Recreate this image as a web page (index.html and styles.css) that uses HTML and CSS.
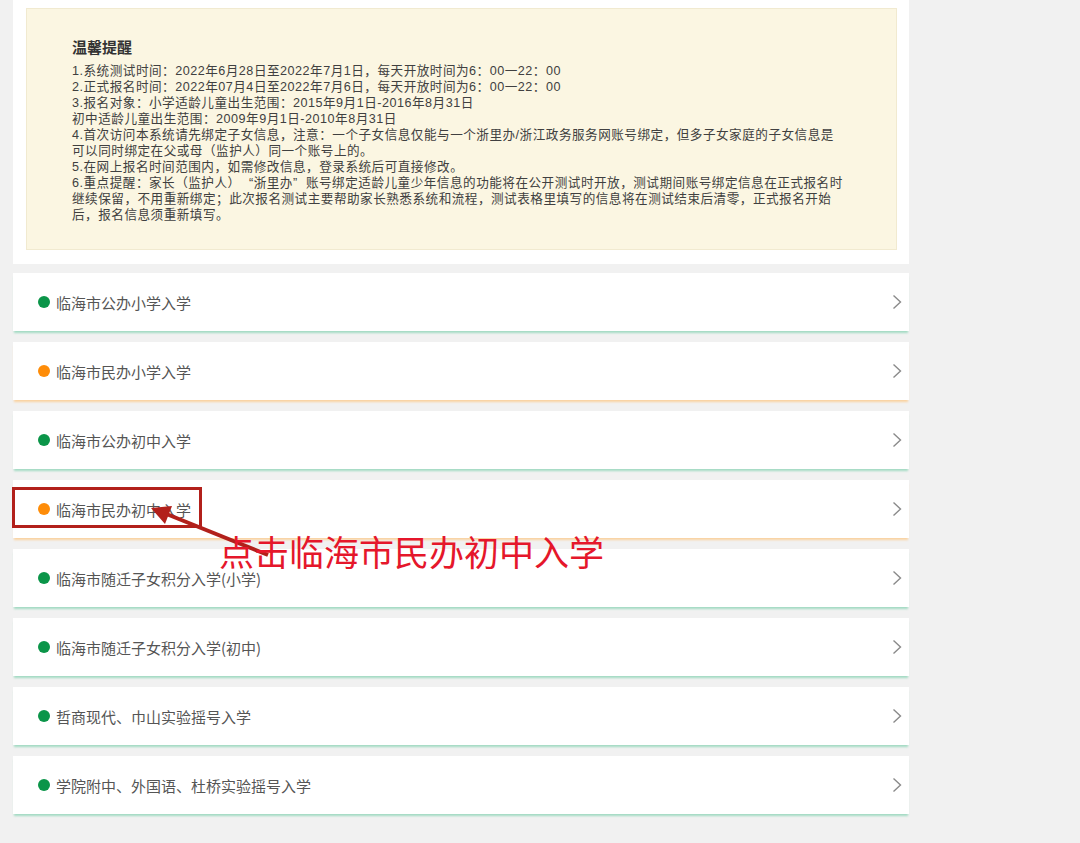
FILE: index.html
```html
<!DOCTYPE html>
<html lang="zh-CN">
<head>
<meta charset="utf-8">
<title>临海市入学报名</title>
<link rel="stylesheet" href="styles.css">
</head>
<body>
<div class="page">
  <section class="notice-panel">
    <div class="notice">
      <h3 class="notice-title">温馨提醒</h3>
      <p>1.系统测试时间：2022年6月28日至2022年7月1日，每天开放时间为6：00一22：00</p>
      <p>2.正式报名时间：2022年07月4日至2022年7月6日，每天开放时间为6：00一22：00</p>
      <p>3.报名对象：小学适龄儿童出生范围：2015年9月1日-2016年8月31日</p>
      <p>初中适龄儿童出生范围：2009年9月1日-2010年8月31日</p>
      <p>4.首次访问本系统请先绑定子女信息，注意：一个子女信息仅能与一个浙里办/浙江政务服务网账号绑定，但多子女家庭的子女信息是<br>可以同时绑定在父或母（监护人）同一个账号上的。</p>
      <p>5.在网上报名时间范围内，如需修改信息，登录系统后可直接修改。</p>
      <p>6.重点提醒：家长（监护人）<span class="quote-open">“</span>浙里办<span class="quote-close">”</span>账号绑定适龄儿童少年信息的功能将在公开测试时开放，测试期间账号绑定信息在正式报名时<br>继续保留，不用重新绑定；此次报名测试主要帮助家长熟悉系统和流程，测试表格里填写的信息将在测试结束后清零，正式报名开始<br>后，报名信息须重新填写。</p>
    </div>
  </section>

  <ul class="entries">
    <li class="entry green"><span class="dot"></span><span class="label">临海市公办小学入学</span><svg class="chev" viewBox="0 0 10 16"><polyline points="1.5,1.5 8.5,8 1.5,14.5"/></svg></li>
    <li class="entry orange"><span class="dot"></span><span class="label">临海市民办小学入学</span><svg class="chev" viewBox="0 0 10 16"><polyline points="1.5,1.5 8.5,8 1.5,14.5"/></svg></li>
    <li class="entry green"><span class="dot"></span><span class="label">临海市公办初中入学</span><svg class="chev" viewBox="0 0 10 16"><polyline points="1.5,1.5 8.5,8 1.5,14.5"/></svg></li>
    <li class="entry orange"><span class="dot"></span><span class="label">临海市民办初中入学</span><svg class="chev" viewBox="0 0 10 16"><polyline points="1.5,1.5 8.5,8 1.5,14.5"/></svg></li>
    <li class="entry green"><span class="dot"></span><span class="label">临海市随迁子女积分入学(小学)</span><svg class="chev" viewBox="0 0 10 16"><polyline points="1.5,1.5 8.5,8 1.5,14.5"/></svg></li>
    <li class="entry green"><span class="dot"></span><span class="label">临海市随迁子女积分入学(初中)</span><svg class="chev" viewBox="0 0 10 16"><polyline points="1.5,1.5 8.5,8 1.5,14.5"/></svg></li>
    <li class="entry green"><span class="dot"></span><span class="label">哲商现代、巾山实验摇号入学</span><svg class="chev" viewBox="0 0 10 16"><polyline points="1.5,1.5 8.5,8 1.5,14.5"/></svg></li>
    <li class="entry green"><span class="dot"></span><span class="label">学院附中、外国语、杜桥实验摇号入学</span><svg class="chev" viewBox="0 0 10 16"><polyline points="1.5,1.5 8.5,8 1.5,14.5"/></svg></li>
  </ul>
</div>

<div class="annot-box"></div>
<svg class="annot-arrow" viewBox="0 0 1080 843">
  <line x1="268" y1="555" x2="164" y2="513"/>
  <polygon points="151,508 172,506 165,524"/>
</svg>
<div class="annot-text">点击临海市民办初中入学</div>
</body>
</html>
```

FILE: styles.css
```css
html, body {
  margin: 0;
  padding: 0;
}
body {
  position: relative;
  background: #f1f1f1;
  font-family: "Noto Sans CJK SC", "Noto Sans", sans-serif;
  color: #333;
  width: 1080px;
  height: 843px;
  overflow: hidden;
}
.page {
  width: 896px;
  margin-left: 13px;
}
.notice-panel {
  background: #fff;
  padding: 8px 12px 14px 13px;
}
.notice {
  background: #fbf6e2;
  border: 1px solid #f1ead0;
  padding: 28px 20px 26px 45px;
}
.notice-title {
  margin: 0 0 6px;
  font-size: 15px;
  font-weight: bold;
  color: #333;
  line-height: 20px;
}
.notice p {
  margin: 0;
  font-family: "Liberation Sans", "Noto Sans CJK SC", sans-serif;
  font-size: 12.6px;
  letter-spacing: 0.5px;
  line-height: 16px;
  color: #404040;
  white-space: nowrap;
}
.quote-open,
.quote-close {
  display: inline-block;
  width: 13px;
}
.quote-open { text-align: right; }
.quote-close { text-align: left; }
.entries {
  list-style: none;
  margin: 9px 0 0;
  padding: 0;
  display: flex;
  flex-direction: column;
  gap: 11px;
}
.entry {
  height: 58px;
  background: #fff;
  display: flex;
  align-items: center;
  padding: 0 7px 0 25px;
}
.entry.green {
  box-shadow: 0 3px 2px -1px #a3dbc3;
}
.entry.orange {
  box-shadow: 0 3px 2px -1px #fad3a1;
}
.dot {
  width: 12px;
  height: 12px;
  border-radius: 50%;
  flex: none;
  margin-right: 6px;
}
.green .dot { background: #0b9549; }
.orange .dot { background: #fe8c08; }
.label {
  flex: 1;
  font-size: 15px;
  color: #555;
}
.chev {
  width: 10px;
  height: 16px;
  fill: none;
  stroke: #8a8a8a;
  stroke-width: 1.4;
}
.annot-box {
  position: absolute;
  left: 12px;
  top: 487px;
  width: 184px;
  height: 35px;
  border: 3px solid #b2201b;
}
.annot-arrow {
  position: absolute;
  left: 0;
  top: 0;
  width: 1080px;
  height: 843px;
  pointer-events: none;
}
.annot-arrow line {
  stroke: #b2201b;
  stroke-width: 4;
}
.annot-arrow polygon {
  fill: #b2201b;
}
.annot-text {
  position: absolute;
  left: 219px;
  top: 536px;
  font-family: "Liberation Sans", "Noto Sans CJK SC", sans-serif;
  font-size: 35px;
  line-height: 36px;
  color: #e5172b;
  white-space: nowrap;
}
```
